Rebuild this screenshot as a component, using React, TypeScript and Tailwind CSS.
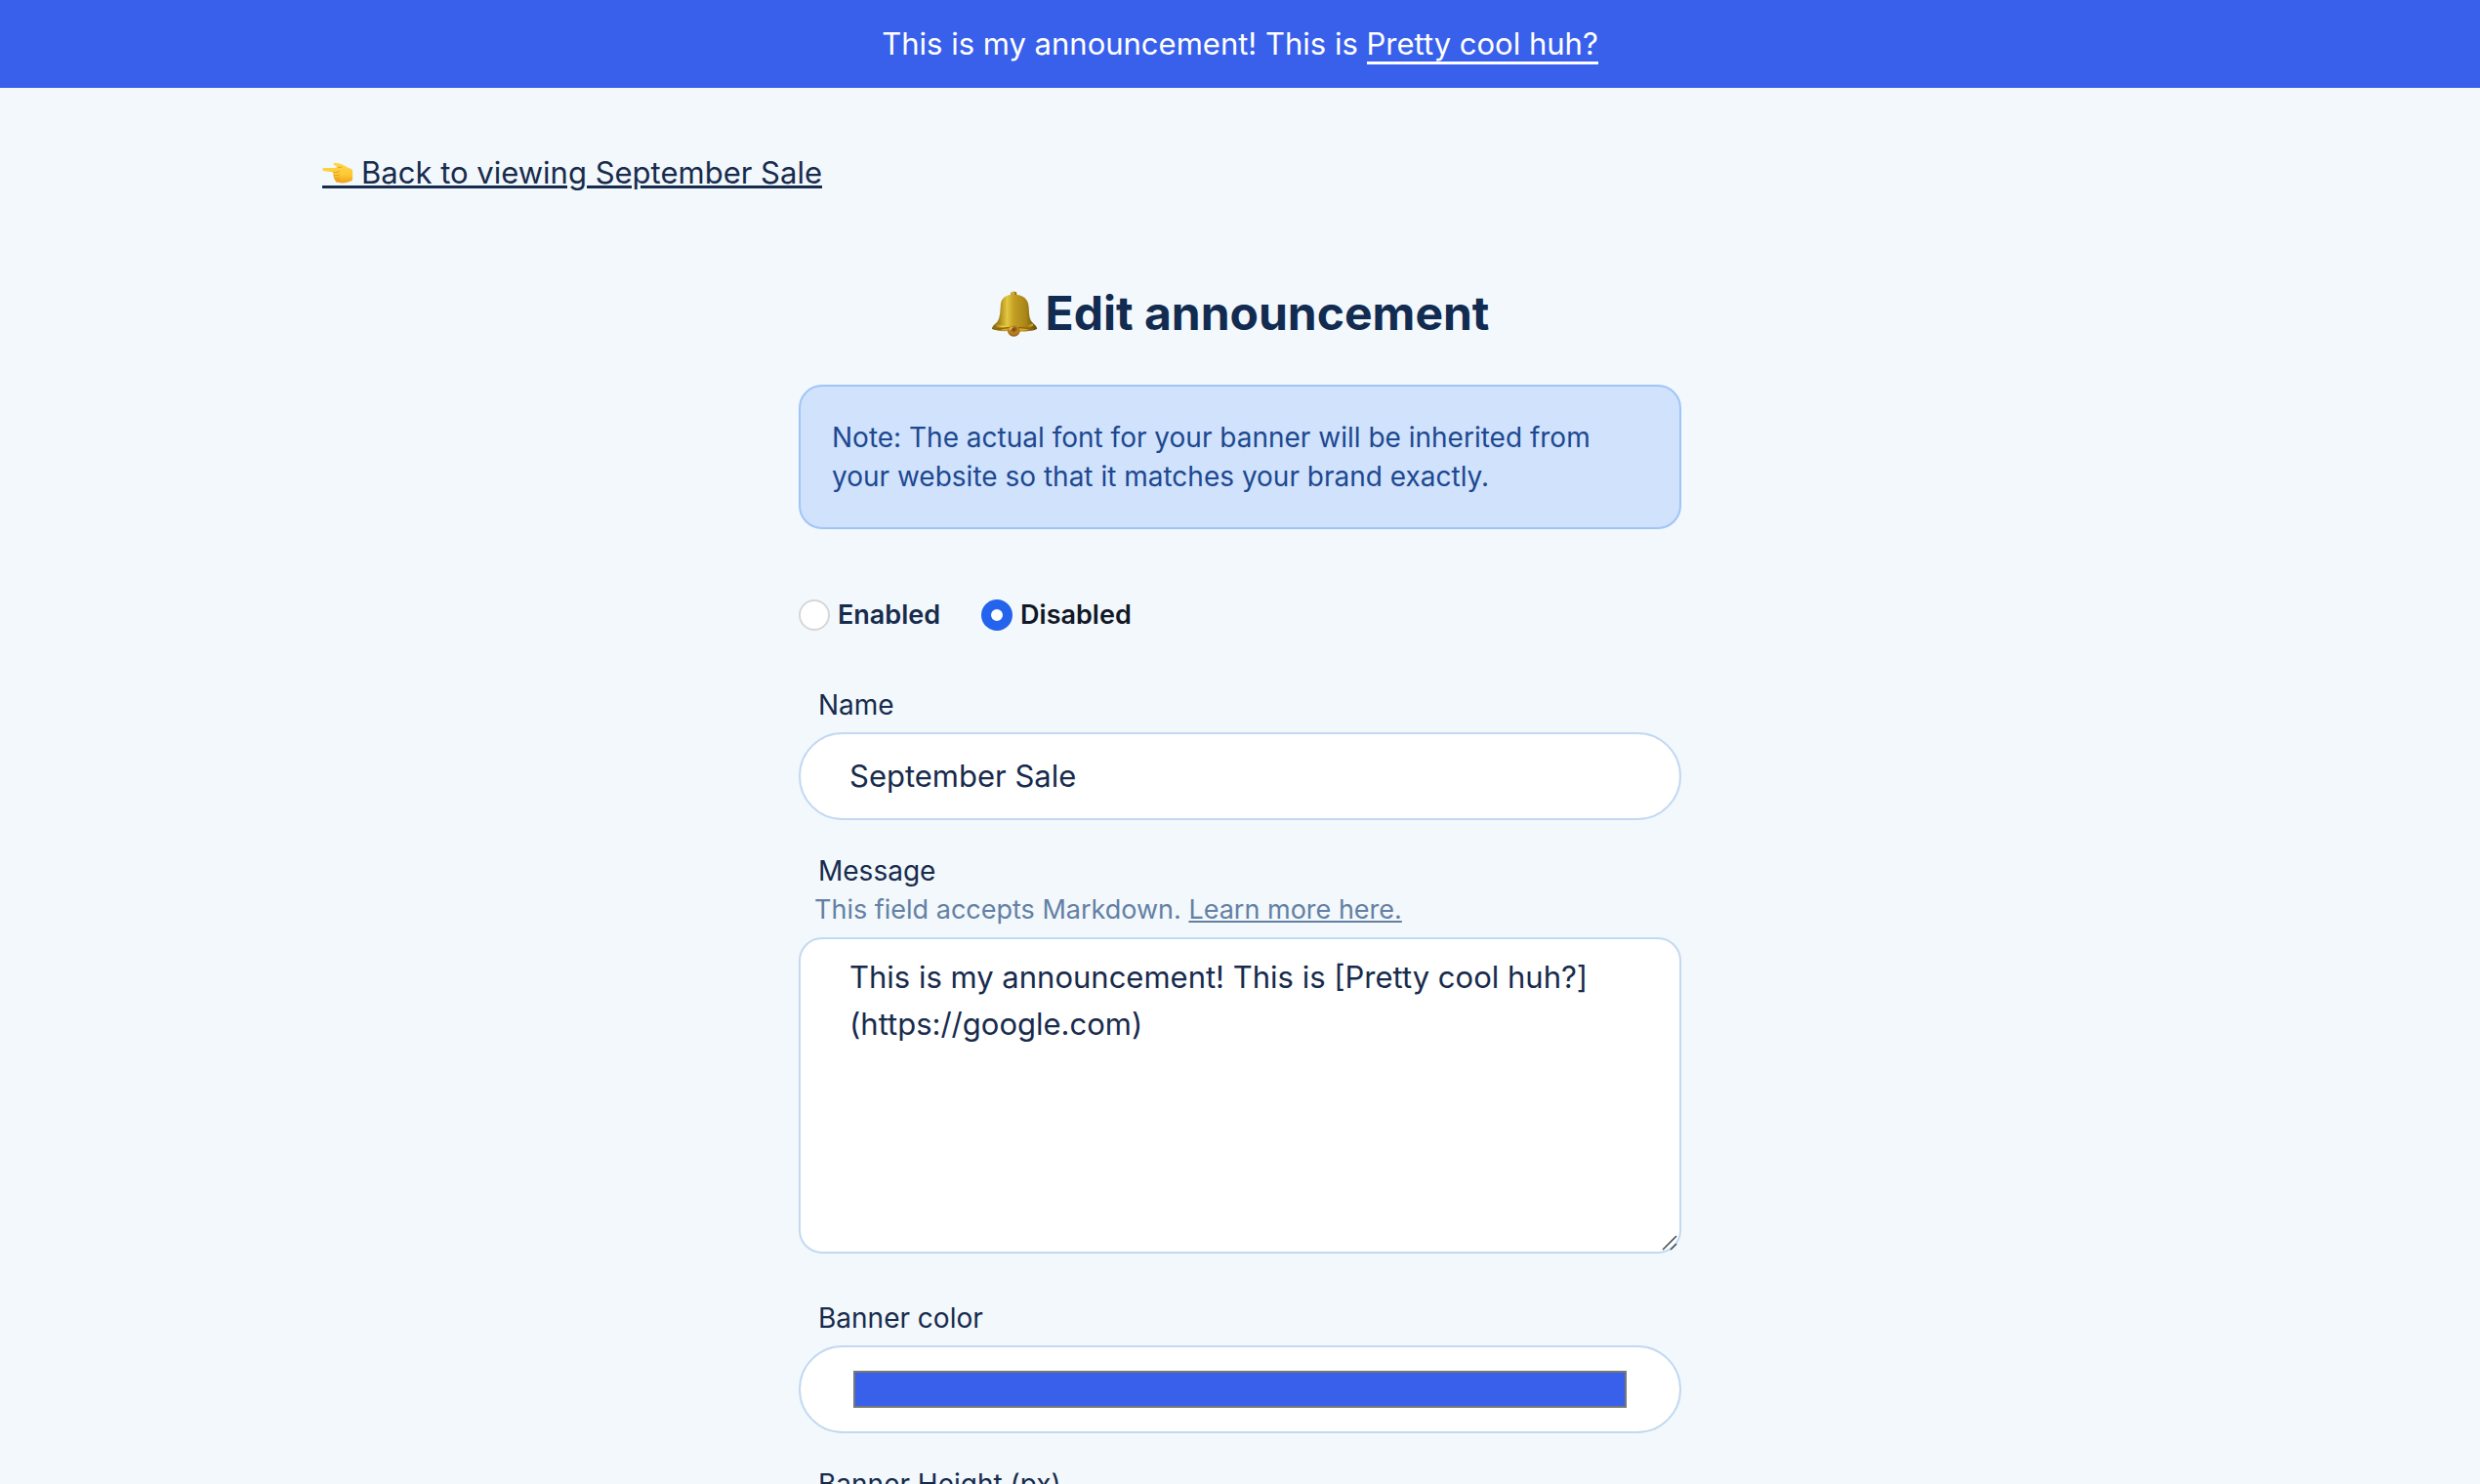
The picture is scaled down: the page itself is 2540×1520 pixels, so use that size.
import React, { useState } from "react";

function PointingHand() {
  return (
    <svg viewBox="0 0 32 22" className="h-[22px] w-8" aria-hidden="true">
      <defs>
        <linearGradient id="hand" x1="0" y1="0" x2="0" y2="1">
          <stop offset="0" stopColor="#ffd84a" />
          <stop offset="0.6" stopColor="#fdc834" />
          <stop offset="1" stopColor="#ee9f1c" />
        </linearGradient>
      </defs>
      <path
        fill="url(#hand)"
        d="M1.400 5.900C0 6 0 8.700 1.400 8.900L11.600 10.600c-.8.9-.7 1.900 0 2.700-.5 1-.2 2.100.6 2.700-.2 1.100.3 2 1.200 2.400.1 1.400 1 2.300 2.600 2.400 2.400.9 6.200 1 8.600.3 1.700-.5 2.700-1.200 4.300-1.300 1.600-.2 2.200-1.200 2.200-2.700V9.300c0-1.400-.8-2.200-2.300-2.700-2.600-.9-4.700-2.600-7.400-3.700C19.500 1.700 16 1 13.300.8c-2-.1-2.500 1.600-.9 2.400l3.400 1.900c-1.200.6-2.300.9-3.600.9z"
      />
      <path
        fill="none"
        stroke="#d9891a"
        strokeWidth="0.7"
        strokeLinecap="round"
        d="M11.600 10.600c2.400.2 4.600-.2 6-1.200M12 13.300c1.800.5 3.800.4 5.200-.3M12.600 16c1.600.5 3.400.5 4.800 0M13.800 18.400c1.400.4 2.800.3 4-.1M15.800 5.100c1.500.4 3 .4 4.200.1"
      />
    </svg>
  );
}

function Bell() {
  return (
    <svg viewBox="0 0 144 142" className="h-[47px] w-12" aria-hidden="true">
      <defs>
        <linearGradient id="bellBody" x1="0" y1="0" x2="1" y2="0">
          <stop offset="0" stopColor="#7d5f0e" />
          <stop offset="0.16" stopColor="#a9851a" />
          <stop offset="0.34" stopColor="#e3c840" />
          <stop offset="0.48" stopColor="#c4a024" />
          <stop offset="0.75" stopColor="#a98517" />
          <stop offset="1" stopColor="#65480a" />
        </linearGradient>
        <linearGradient id="bellRim" x1="0" y1="0" x2="1" y2="0">
          <stop offset="0" stopColor="#a97f12" />
          <stop offset="0.2" stopColor="#f5e04e" />
          <stop offset="0.5" stopColor="#c99a1e" />
          <stop offset="0.85" stopColor="#a87812" />
          <stop offset="1" stopColor="#e3c53c" />
        </linearGradient>
        <radialGradient id="clapper" cx="0.5" cy="0.35" r="0.65">
          <stop offset="0" stopColor="#6e420e" />
          <stop offset="0.55" stopColor="#c08420" />
          <stop offset="1" stopColor="#8a5a14" />
        </radialGradient>
      </defs>
      <path fill="url(#bellBody)" d="M62 4Q70-1 78 4L80 16H60z" />
      <path
        fill="url(#bellBody)"
        d="M60 12C42 14 33 23 30 38 27 55 30 72 22 90 18 100 4 106 2 117 10 124 38 126 72 126S134 124 142 117C141 107 127 100 122 90 115 73 119 56 114 38 111 24 98 14 80 12z"
      />
      <path
        fill="none"
        stroke="url(#bellRim)"
        strokeWidth="7"
        d="M14 105C38 116 104 117 129 104"
        opacity="0.8"
      />
      <path fill="#8f6610" d="M10 118C28 110 116 110 134 118 118 125 26 125 10 118z" />
      <path fill="#d8a82c" d="M28 120C50 114 94 114 118 120 92 125 54 125 28 120z" />
      <ellipse cx="70" cy="124" rx="19" ry="17" fill="url(#clapper)" />
      <path fill="#f0cb58" d="M54 117q5-7 16-7-4 7-13 13z" opacity="0.7" />
    </svg>
  );
}

const field =
  "block w-full border-2 border-[#c3d9f1] bg-white text-[31px] leading-12 text-[#172b4d] outline-none";
const label = "block pl-5 text-[28px] leading-10 text-[#172b4d]";
const radio =
  "size-8 appearance-none rounded-full border-2 border-[#d5d7da] bg-white checked:border-[10px] checked:border-[#2463eb]";

export default function App() {
  const [enabled, setEnabled] = useState(false);
  const [name, setName] = useState("September Sale");
  const [message, setMessage] = useState(
    "This is my announcement! This is [Pretty cool huh?](https://google.com)",
  );
  const [color, setColor] = useState("#3860eb");
  const [height, setHeight] = useState("");

  return (
    <div className="min-h-screen bg-[#f2f8fc] font-['Inter',sans-serif] text-[#172b4d]">
      <div className="flex h-[90px] items-center justify-center bg-[#3860eb] text-[31px] leading-[42px] text-white">
        <p>
          This is my announcement! This is{" "}
          <a href="https://google.com" className="border-b-[3px] border-white">
            Pretty cool huh?
          </a>
        </p>
      </div>

      <main className="mx-auto w-full max-w-[1880px] pt-[63px] pb-16">
        <a href="#view" className="inline-flex text-[31px] leading-12">
          <span className="mb-2 flex items-end border-b-[3px] border-[#172b4d] pr-2 pb-[2px]">
            <PointingHand />
          </span>
          <span className="underline decoration-[3px] underline-offset-2">
            Back to viewing September Sale
          </span>
        </a>

        <form className="mx-auto mt-[92px] max-w-[904px]">
          <h1 className="flex items-center justify-center gap-2 text-[48px] leading-14 font-bold text-[#122b50]">
            <Bell />
            Edit announcement
          </h1>

          <p className="mt-[45px] rounded-3xl border-2 border-[#9fc5f8] bg-[#d0e2fc] py-8 pr-14 pl-8 text-[28px] leading-10 text-[#1d4890]">
            Note: The actual font for your banner will be inherited from your website so that it
            matches your brand exactly.
          </p>

          <div className="mt-[68px] flex gap-[42px] text-[27px] leading-10 font-semibold">
            <label className="flex items-center gap-2">
              <input
                type="radio"
                name="status"
                className={radio}
                checked={enabled}
                onChange={() => setEnabled(true)}
              />
              Enabled
            </label>
            <label className="flex items-center gap-2 text-[#111827]">
              <input
                type="radio"
                name="status"
                className={radio}
                checked={!enabled}
                onChange={() => setEnabled(false)}
              />
              Disabled
            </label>
          </div>

          <div className="mt-[52px]">
            <label htmlFor="name" className={label}>
              Name
            </label>
            <input
              id="name"
              type="text"
              className={`${field} mt-2 rounded-full px-[50px] py-[19px]`}
              value={name}
              onChange={(e) => setName(e.target.value)}
            />
          </div>

          <div className="mt-8">
            <label htmlFor="message" className={label}>
              Message
            </label>
            <p className="pl-4 text-[27px] leading-10 text-[#6480a4]">
              This field accepts Markdown.{" "}
              <a href="#markdown" className="underline decoration-2 underline-offset-2">
                Learn more here.
              </a>
            </p>
            <div className="relative mt-2">
              <textarea
                id="message"
                className={`${field} h-[324px] resize-none rounded-3xl px-[50px] py-[15px]`}
                value={message}
                onChange={(e) => setMessage(e.target.value)}
              />
              <svg
                viewBox="0 0 16 16"
                className="pointer-events-none absolute right-1 bottom-[3px] size-4"
                aria-hidden="true"
              >
                <path
                  d="M1 15 15 1M9 15l6-6"
                  fill="none"
                  stroke="#4b5056"
                  strokeWidth="1.6"
                />
              </svg>
            </div>
          </div>

          <div className="mt-[46px]">
            <label htmlFor="color" className={label}>
              Banner color
            </label>
            <input
              id="color"
              type="color"
              className="mt-2 block h-[90px] w-full appearance-none rounded-full border-2 border-[#c3d9f1] bg-white px-[54px] py-6 [&::-webkit-color-swatch]:rounded-none [&::-webkit-color-swatch]:border-2 [&::-webkit-color-swatch]:border-[#777777] [&::-webkit-color-swatch-wrapper]:p-0"
              value={color}
              onChange={(e) => setColor(e.target.value)}
            />
          </div>

          <div className="mt-8">
            <label htmlFor="height" className={label}>
              Banner Height (px)
            </label>
            <input
              id="height"
              type="text"
              inputMode="numeric"
              className={`${field} mt-2 rounded-full px-[50px] py-[19px]`}
              value={height}
              onChange={(e) => setHeight(e.target.value)}
            />
          </div>
        </form>
      </main>
    </div>
  );
}
